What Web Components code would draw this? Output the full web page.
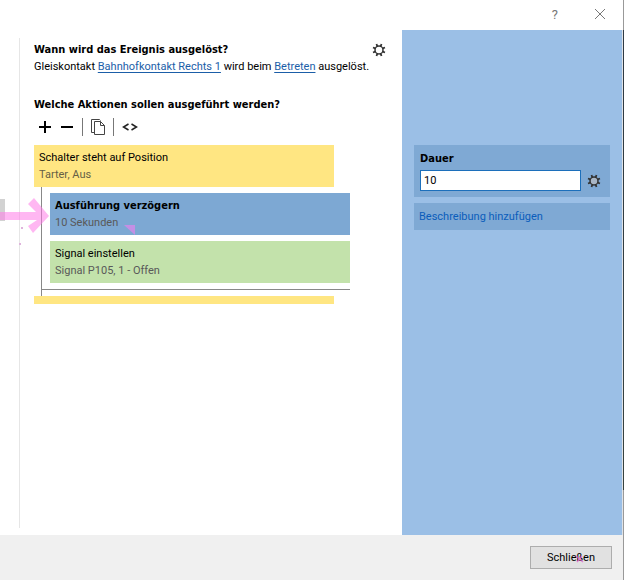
<!DOCTYPE html>
<html lang="de">
<head>
<meta charset="utf-8">
<title>Ereignis bearbeiten</title>
<style>
  html, body { margin: 0; height: 100%; }
  body { --bold: bold 11px/17px "DejaVu Sans Condensed", "DejaVu Sans", sans-serif; font: 11px/17px Roboto, "Liberation Sans", sans-serif; color: #000; background: #fff; }
</style>
</head>
<body>
<event-window>
  <title-bar slot="title"></title-bar>
  <event-editor slot="main">
    <trigger-info></trigger-info>
    <action-toolbar></action-toolbar>
    <action-group heading="Schalter steht auf Position" detail="Tarter, Aus">
      <action-card kind="delay" selected heading="Ausführung verzögern" detail="10 Sekunden"></action-card>
      <action-card kind="signal" heading="Signal einstellen" detail="Signal P105, 1 - Offen"></action-card>
    </action-group>
  </event-editor>
  <property-panel slot="side"></property-panel>
  <dialog-footer slot="footer"></dialog-footer>
</event-window>
<marker-arrow></marker-arrow>

<script>
const define = (name, html, setup) => {
  const tpl = document.createElement('template');
  tpl.innerHTML = html;
  customElements.define(name, class extends HTMLElement {
    constructor() {
      super();
      this.attachShadow({ mode: 'open' }).append(tpl.content.cloneNode(true));
    }
    connectedCallback() { if (setup) setup(this, this.shadowRoot); }
  });
};
const fillText = (host, root) => {
  root.querySelector('.heading').textContent = host.getAttribute('heading');
  root.querySelector('.detail').textContent = host.getAttribute('detail');
};

define('event-window', `
<style>
  :host { display: grid; grid-template: 30px minmax(0, 1fr) 45px / minmax(0, 1fr) 221px 1px; min-height: 100vh; }
  .top, .bottom { grid-column: 1 / 3; display: grid; }
  .main, .side { display: grid; grid-template-columns: minmax(0, 1fr); }
  .side { border-right: 1px solid #dfe3e8; }
  .edge { grid-column: 3; grid-row: 1 / -1; background: linear-gradient(#999 30px, #2f3a44 30px, #37423f calc(100% - 90px), #999 calc(100% - 90px)); }
</style>
<div class="edge"></div>
<div class="top"><slot name="title"></slot></div>
<div class="main"><slot name="main"></slot></div>
<div class="side"><slot name="side"></slot></div>
<div class="bottom"><slot name="footer"></slot></div>`);

define('title-bar', `
<style>
  :host { display: flex; justify-content: flex-end; align-items: center; gap: 36px; padding: 0 17px 2px 0; background: #fff; }
  button { all: unset; display: flex; color: #777; font-size: 13px; }
  svg { display: block; }
</style>
<button aria-label="Hilfe">?</button>
<button aria-label="Fenster schließen"><svg width="12" height="12" viewBox="0 0 12 12"><path d="M1 1l10 10M11 1L1 11" stroke="#777" fill="none"/></svg></button>`);

define('gear-icon', `
<style>:host { display: block; } svg { display: block; }</style>
<svg width="14" height="14" viewBox="0 0 14 14" fill="none" stroke="currentColor">
  <circle cx="7" cy="7" r="4" fill="var(--gear-fill, none)" stroke-width="1.5"/>
  <path stroke-width="1.8" d="M5.300 3.200L4.500 1M8.700 3.200L9.500 1M5.300 10.800L4.500 13M8.700 10.800L9.500 13M3.200 5.300L1 4.500M3.200 8.700L1 9.500M10.800 5.300L13 4.500M10.800 8.700L13 9.500"/>
</svg>`);

define('event-editor', `
<style>
  :host { display: grid; grid-template-columns: 19px minmax(0, 1fr); padding: 8px 0 7px; background: #fff; }
  .content { border-left: 1px solid #e6e6e6; padding: 2px 16px 0 14px; }
</style>
<div></div><div class="content"><slot></slot></div>`);

define('trigger-info', `
<style>
  :host { display: block; }
  header { display: flex; justify-content: space-between; align-items: center; height: 18px; }
  h2 { margin: 0; font: var(--bold); }
  p { margin: 0; white-space: nowrap; }
  a { color: #1b5ea8; text-underline-offset: 2px; }
  button { all: unset; color: #333; padding-top: 2px; }
</style>
<header><h2>Wann wird das Ereignis ausgelöst?</h2><button aria-label="Einstellungen"><gear-icon></gear-icon></button></header>
<p>Gleiskontakt <a href="#kontakt">Bahnhofkontakt Rechts 1</a> wird beim <a href="#betreten">Betreten</a> ausgelöst.</p>`);

define('action-toolbar', `
<style>
  :host { display: block; padding-top: 21px; }
  h2 { margin: 0; font: var(--bold); }
  .bar { display: flex; align-items: center; gap: 8px; height: 20px; padding: 4px 0 8px 4px; }
  button { all: unset; display: block; }
  svg { display: block; }
  i { width: 1px; height: 18px; background: #777; }
</style>
<h2>Welche Aktionen sollen ausgeführt werden?</h2>
<div class="bar">
  <button aria-label="Hinzufügen"><svg width="14" height="14"><path d="M1 7h12M7 1v12" stroke="#000" stroke-width="2"/></svg></button>
  <button aria-label="Entfernen"><svg width="14" height="14"><path d="M1 7h12" stroke="#000" stroke-width="2"/></svg></button>
  <i></i>
  <button aria-label="Kopieren"><svg width="14" height="18" fill="none" stroke="#444"><path d="M3.500 14.500H.5V1.500H8.500L9.500 2.500M3.500 3.500H9.500L13.500 7.500V16.500H3.500ZM9.500 3.500V7.500H13.500"/></svg></button>
  <i></i>
  <button aria-label="Quelltext"><svg width="16" height="8" fill="none" stroke="#222" stroke-width="1.500"><path d="M6.500 1L1.500 4l5 3M9.500 1l5 3l-5 3"/></svg></button>
</div>`);

define('action-card', `
<style>
  :host { display: block; padding: 4px 5px; background: var(--card, #c3e2ab); }
  :host([kind="delay"]) { --card: #7da8d3; }
  :host([selected]) .heading { font: var(--bold); }
  .detail { color: #595959; }
</style>
<div class="heading"></div><div class="detail"></div>`, fillText);

define('action-group', `
<style>
  :host { display: block; margin-right: 36px; }
  .head { padding: 4px 5px; margin-right: 16px; background: #ffe682; }
  .detail { color: #665f45; }
  .body { margin-left: 7px; border-left: 1px solid #888; padding-bottom: 6px; }
  .list { display: grid; gap: 6px; padding: 6px 0 6px 8px; border-bottom: 1px solid #888; }
  .end { height: 8px; margin-right: 16px; background: #ffe682; }
</style>
<div class="head"><div class="heading"></div><div class="detail"></div></div>
<div class="body"><div class="list"><slot></slot></div></div>
<div class="end"></div>`, fillText);

define('property-panel', `
<style>
  :host { display: flex; flex-direction: column; gap: 6px; padding: 115px 12px 0; background: #9bbfe6; --gear-fill: #a9b6c5; }
  section { background: #7fa9d4; padding: 5px; }
  label { display: block; padding-left: 1px; font: var(--bold); }
  .row { display: flex; align-items: center; gap: 6px; padding: 3px 4px 1px 1px; }
  input { flex: 1; width: 0; min-width: 0; box-sizing: border-box; height: 21px; margin: 0; padding: 0 3px; border: 1px solid #1c6fbb; border-radius: 0; background: #fff; font: inherit; color: #000; outline: 0; }
  button { all: unset; color: #333; }
  a { color: #0b5dbb; text-decoration: none; }
</style>
<section><label for="dauer">Dauer</label><div class="row"><input id="dauer" value="10"><button aria-label="Optionen"><gear-icon></gear-icon></button></div></section>
<section><a href="#beschreibung">Beschreibung hinzufügen</a></section>`);

define('dialog-footer', `
<style>
  :host { display: flex; justify-content: flex-end; align-items: center; padding-right: 11px; background: #f0f0f0; }
  button { position: relative; width: 82px; height: 23px; box-sizing: border-box; padding: 0; border: 1px solid #adadad; border-radius: 0; background: #e1e1e1; font: inherit; color: #000; }
  svg { position: absolute; left: 44px; top: 8px; }
</style>
<button>Schließen<svg width="9" height="8"><path d="M1 1L8 7M7 1L2 7" stroke="#e45ad0" stroke-width="1.500" opacity=".7"/></svg></button>`);

define('marker-arrow', `
<style>:host { position: absolute; left: 0; top: 190px; pointer-events: none; } svg { display: block; }</style>
<svg width="140" height="60" fill="none">
  <path d="M0 9H5V31H0Z" fill="#d2d2d2"/>
  <path d="M0 22H36L28 14L34 8L49 26L33 43L28 36L37 30H0Z" fill="#ff7be8" opacity=".55"/>
  <path d="M124 35H135V45Z" fill="#c48fe4"/>
  <path d="M21 37h2v2h-2ZM19 53h2v2h-2Z" fill="#dfb4dc"/>
</svg>`);
</script>
</body>
</html>
